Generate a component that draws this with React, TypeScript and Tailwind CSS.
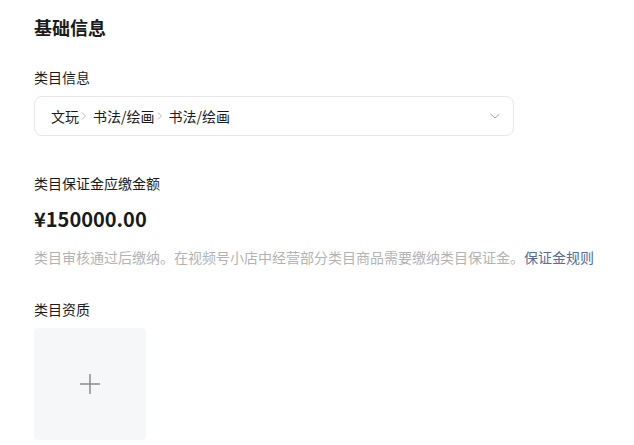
export default function App() {
  const path = ["文玩", "书法/绘画", "书法/绘画"];
  return (
    <div
      className="min-h-screen bg-white px-[34px] pt-[14px] text-[#1a1a1a]"
      style={{ fontFamily: '"Noto Sans CJK SC", "Noto Sans", sans-serif' }}
    >
      <h2 className="text-[18px] font-bold leading-[26px]">基础信息</h2>

      <div className="mt-[26px] text-[14px] leading-[22px]">类目信息</div>
      <div className="mt-[8px] flex h-[40px] w-[480px] items-center justify-between rounded-[8px] border border-[#e7e7e7] pl-[16px] pr-[12px]">
        <div className="flex items-center text-[14px]">
          {path.map((p, i) => (
            <span key={i} className="flex items-center">
              {i > 0 && (
                <svg width="10" height="10" viewBox="0 0 10 10" className="ml-[0px] mr-[4px]">
                  <path d="M3 1.5 L6.5 5 L3 8.5" fill="none" stroke="#b8b8b8" strokeWidth="1" />
                </svg>
              )}
              <span>{p}</span>
            </span>
          ))}
        </div>
        <svg width="12" height="12" viewBox="0 0 12 12">
          <path d="M1.5 4 L6 8 L10.5 4" fill="none" stroke="#a8a8a8" strokeWidth="1" />
        </svg>
      </div>

      <div className="mt-[36px] text-[14px] leading-[22px]">类目保证金应缴金额</div>
      <div className="mt-[11px] text-[20px] font-semibold leading-[28px]">¥150000.00</div>
      <div className="mt-[13px] text-[14px] leading-[22px] text-[#b3b3b3]">
        类目审核通过后缴纳。在视频号小店中经营部分类目商品需要缴纳类目保证金。
        <span className="text-[#576b95]">保证金规则</span>
      </div>

      <div className="mt-[30px] text-[14px] leading-[22px]">类目资质</div>
      <div className="mt-[8px] flex h-[112px] w-[112px] items-center justify-center rounded-[4px] bg-[#f6f7f8]">
        <svg width="22" height="22" viewBox="0 0 22 22">
          <path d="M11 1 V21 M1 11 H21" stroke="#8c8c8c" strokeWidth="1.5" />
        </svg>
      </div>
    </div>
  );
}
